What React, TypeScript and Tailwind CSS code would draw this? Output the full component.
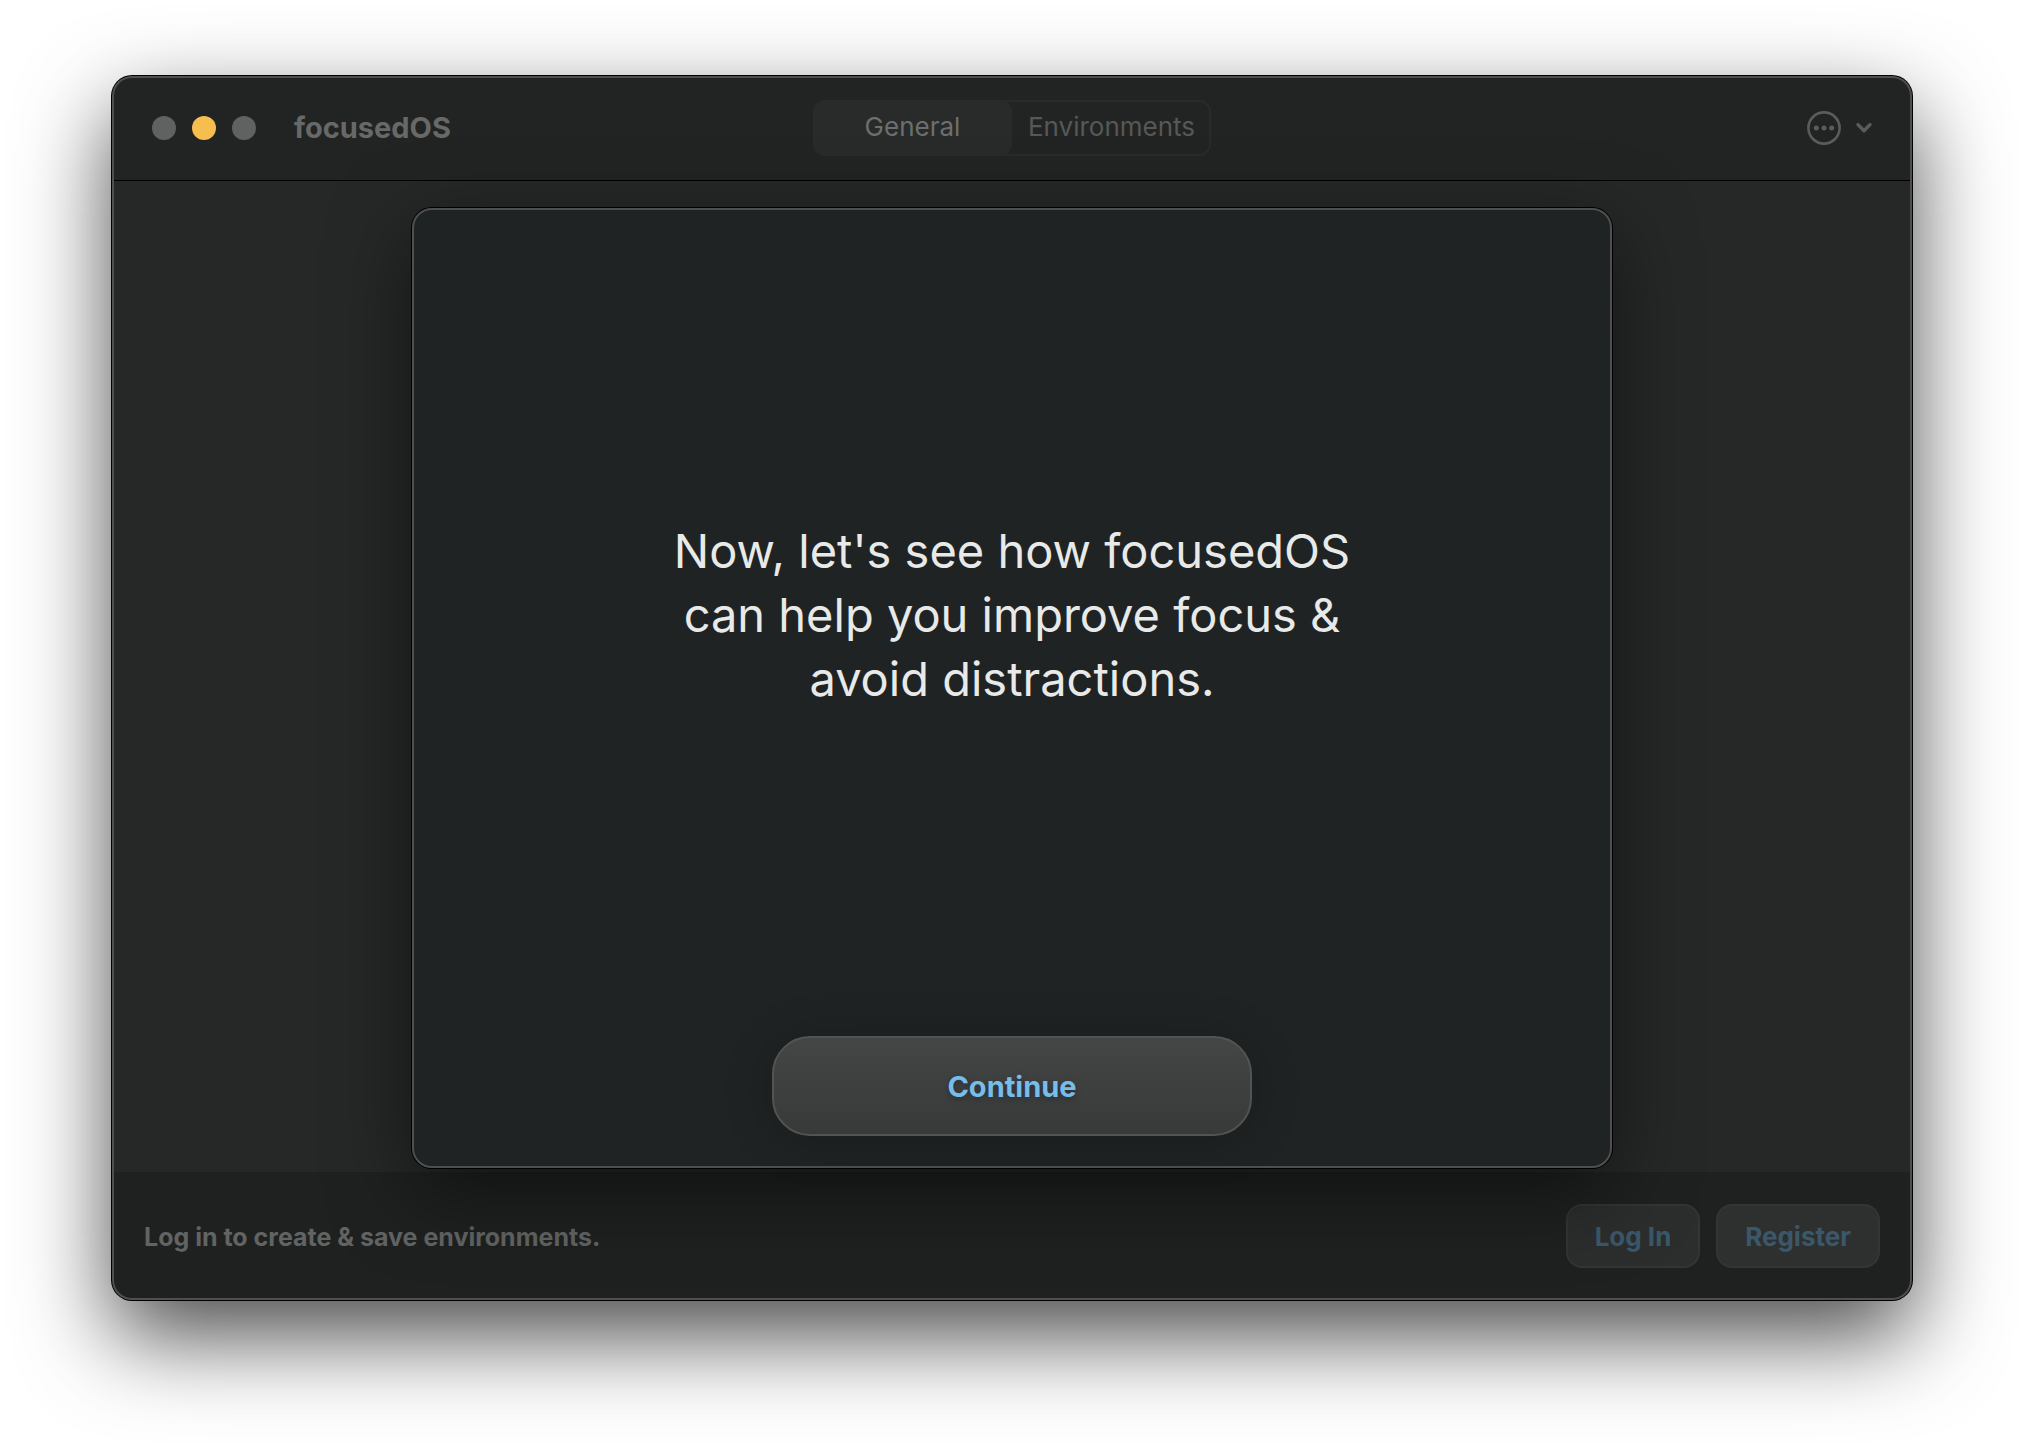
import React from 'react';

type Tab = 'General' | 'Environments';

const tabs: Tab[] = ['General', 'Environments'];

const WindowControls: React.FC = () => (
  <div className="flex gap-4">
    <button aria-label="Close" className="size-6 rounded-full bg-[#606261]" />
    <button aria-label="Minimize" className="size-6 rounded-full bg-[#f6be4f]" />
    <button aria-label="Zoom" className="size-6 rounded-full bg-[#606261]" />
  </div>
);

const MoreMenuButton: React.FC = () => (
  <button aria-label="More options" className="flex items-center gap-[15px] text-[#5a5c5b]">
    <svg width="34" height="34" viewBox="0 0 34 34" fill="none">
      <circle cx="17" cy="17" r="15.6" stroke="currentColor" strokeWidth="2.6" />
      <circle cx="9.3" cy="17" r="2.5" fill="currentColor" />
      <circle cx="17" cy="17" r="2.5" fill="currentColor" />
      <circle cx="24.7" cy="17" r="2.5" fill="currentColor" />
    </svg>
    <svg width="16" height="12" viewBox="0 0 16 12" fill="none">
      <path
        d="M2 2.6L8 8.8L14 2.6"
        stroke="currentColor"
        strokeWidth="3.4"
        strokeLinecap="round"
        strokeLinejoin="round"
      />
    </svg>
  </button>
);

const App: React.FC = () => {
  const [activeTab, setActiveTab] = React.useState<Tab>('General');

  return (
    <div className="flex min-h-screen bg-white px-28 pt-19 pb-37 font-['Inter',sans-serif]">
      <div className="relative flex flex-1 flex-col overflow-hidden rounded-[20px] bg-[#262827] shadow-[0_0_0_1px_#000,0_36px_90px_rgba(0,0,0,0.71)]">
        <header className="grid grid-cols-[1fr_auto_1fr] items-center border-b border-black bg-[#222423] px-10 py-6">
          <div className="flex items-center gap-[38px]">
            <WindowControls />
            <h1 className="text-[29px] leading-8 font-bold text-[#676968]">focusedOS</h1>
          </div>

          <div className="grid grid-cols-2 rounded-xl shadow-[inset_0_0_0_2px_#292b2a]">
            {tabs.map((tab) => (
              <button
                key={tab}
                onClick={() => setActiveTab(tab)}
                className={`h-14 w-[199px] rounded-xl pb-1 text-[26px] ${
                  activeTab === tab ? 'bg-[#292b2a] text-[#6d6f6e]' : 'text-[#565857]'
                }`}
              >
                {tab}
              </button>
            ))}
          </div>

          <div className="flex justify-end">
            <MoreMenuButton />
          </div>
        </header>

        {/* Onboarding sheet */}
        <main className="relative z-10 flex flex-1 flex-col items-center pt-[27px] pb-1">
          <section className="flex w-2/3 flex-1 flex-col items-center rounded-[20px] border-2 border-[#4e504f] bg-[#202323] pb-[30px] shadow-[0_0_0_1px_#000,0_24px_80px_rgba(0,0,0,0.5)]">
            <div className="flex flex-1 items-center pb-4">
              <p className="text-center text-[47px] leading-16 text-[#e8eae9]">
                Now, let's see how focusedOS
                <br />
                can help you improve focus &amp;
                <br />
                avoid distractions.
              </p>
            </div>
            <button className="h-25 w-120 rounded-[38px] border-2 border-[#525453] bg-linear-to-b from-[#444645] to-[#383a39] pt-0.5 text-[29px] font-bold text-[#76bdea] shadow-[0_4px_50px_rgba(0,0,0,0.2)] text-shadow-[0_2px_6px_rgba(0,0,0,0.3)]">
              Continue
            </button>
          </section>
        </main>

        <footer className="flex items-center justify-between bg-[#1f2120] p-8">
          <p className="pt-0.5 text-[25px] leading-8 font-bold text-[#626463]">
            Log in to create &amp; save environments.
          </p>
          <div className="flex gap-4">
            <button className="h-16 w-[134px] rounded-2xl border-2 border-[#333534] bg-[#2c2e2d] text-[26px] font-bold text-[#3b586b]">
              Log In
            </button>
            <button className="h-16 w-[164px] rounded-2xl border-2 border-[#333534] bg-[#2e302f] text-[26px] font-bold text-[#3b586b]">
              Register
            </button>
          </div>
        </footer>

        {/* Light rim around the window edge */}
        <div className="pointer-events-none absolute inset-0 z-20 rounded-[20px] border-2 border-[#4e504f]" />
      </div>
    </div>
  );
};

export default App;
